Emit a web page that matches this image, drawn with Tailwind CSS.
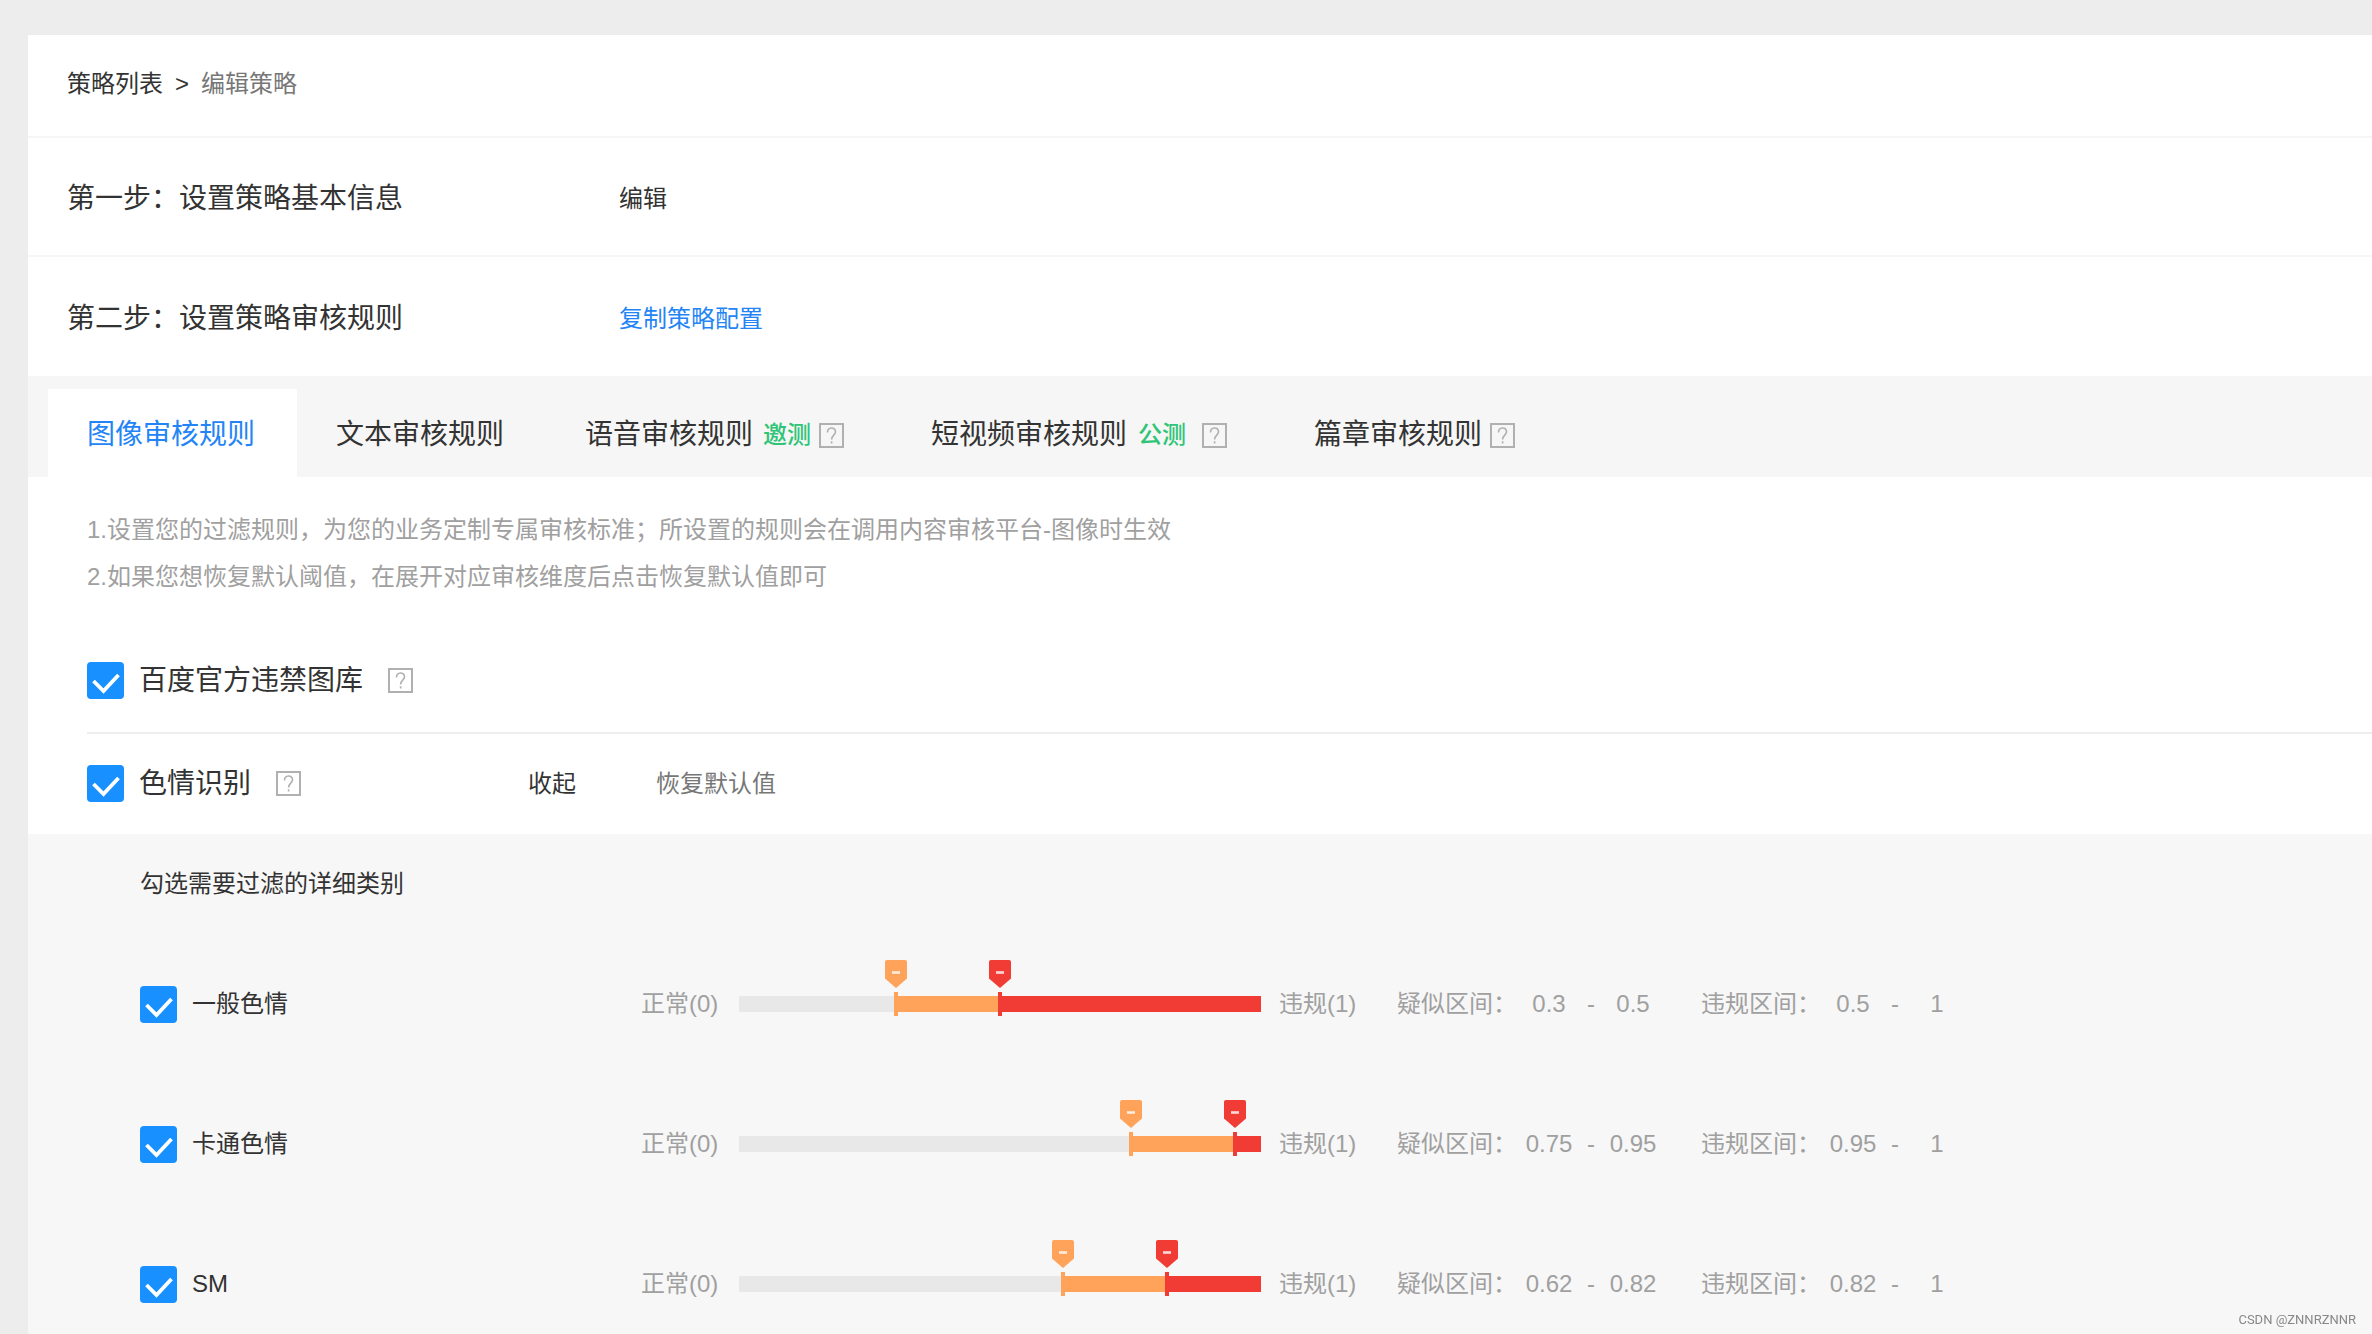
<!DOCTYPE html>
<html lang="zh-CN">
<head>
<meta charset="utf-8">
<meta name="viewport" content="width=device-width, initial-scale=1">
<title>编辑策略</title>
<script src="https://cdn.jsdelivr.net/npm/@tailwindcss/browser@4"></script>
</head>
<body class="bg-[#ededed] font-['Liberation_Sans','Noto_Sans_CJK_SC',sans-serif] text-2xl leading-9 font-normal text-[#333]">
<svg class="hidden" aria-hidden="true">
  <symbol id="help" viewBox="0 0 25 25">
    <rect x="1" y="1" width="23" height="23" fill="none" stroke="#b0b0b0" stroke-width="2"/>
    <path d="M8.5 9.5C8.5 3.5 16.5 3.8 16.5 8.8C16.5 12 12.6 12.4 12.6 16.4M12.6 18.2V20.4" fill="none" stroke="#b0b0b0" stroke-width="1.6"/>
  </symbol>
  <symbol id="check" viewBox="0 0 37 37">
    <path d="M6.5 19L16.5 29L31.5 13" fill="none" stroke="#fff" stroke-width="3.8"/>
  </symbol>
  <symbol id="pin" viewBox="0 0 22 28">
    <path d="M2 0H20Q22 0 22 2V18.5L11 28L0 18.5V2Q0 0 2 0Z" fill="currentColor"/>
    <path d="M7 12.5H15" stroke="#fff" stroke-opacity=".8" stroke-width="2.6"/>
  </symbol>
</svg>

<main class="h-screen overflow-hidden pt-[35px] pl-7">
  <div class="min-h-full bg-white">
    <nav class="flex h-[103px] items-center gap-3 border-b-2 border-[#f6f6f6] pb-1 pl-[39px]">
      <a href="#">策略列表</a>
      <span>&gt;</span>
      <span class="text-[#777]">编辑策略</span>
    </nav>

    <section class="flex h-[119px] items-center border-b-2 border-[#f6f6f6] pt-1 pl-[39px]">
      <h2 class="w-[552px] text-[28px]">第一步：设置策略基本信息</h2>
      <button type="button">编辑</button>
    </section>

    <section class="flex h-[119px] items-center pt-1 pl-[39px]">
      <h2 class="w-[552px] text-[28px]">第二步：设置策略审核规则</h2>
      <button type="button" class="text-[#2385f5]">复制策略配置</button>
    </section>

    <div role="tablist" class="flex items-end bg-[#f6f6f6] pt-[13px] pl-5 text-[28px]">
      <button type="button" role="tab" aria-selected="true" class="h-22 bg-white pt-1 pr-[42px] pl-[39px] text-[#2385f5]">图像审核规则</button>
      <button type="button" role="tab" class="h-22 pt-1 pr-[42px] pl-[39px]">文本审核规则</button>
      <button type="button" role="tab" class="flex h-22 items-center pt-1 pr-12 pl-[39px]">语音审核规则<span class="ml-[10px] text-2xl leading-9 font-medium text-[#2fc476]">邀测</span><svg class="ml-2 size-[25px]"><use href="#help"/></svg></button>
      <button type="button" role="tab" class="flex h-22 items-center pt-1 pr-12 pl-[39px]">短视频审核规则<span class="ml-[11px] text-2xl leading-9 font-medium text-[#2fc476]">公测</span><svg class="ml-4 size-[25px]"><use href="#help"/></svg></button>
      <button type="button" role="tab" class="flex h-22 items-center pt-1 pr-12 pl-[39px]">篇章审核规则<svg class="ml-2 size-[25px]"><use href="#help"/></svg></button>
    </div>

    <div class="pt-[29px] pl-[59px] leading-[47px] text-[#a0a0a0]">
      <p>1.设置您的过滤规则，为您的业务定制专属审核标准；所设置的规则会在调用内容审核平台-图像时生效</p>
      <p>2.如果您想恢复默认阈值，在展开对应审核维度后点击恢复默认值即可</p>
    </div>

    <div class="ml-[59px] flex h-[134px] items-end border-b-2 border-[#eee] pb-[33px]">
      <label class="flex items-center gap-[15px] text-[28px]">
        <span class="relative size-[37px]"><input type="checkbox" checked class="size-full appearance-none rounded-sm bg-[#1890ff]"><svg class="pointer-events-none absolute inset-0 size-full"><use href="#check"/></svg></span>
        百度官方违禁图库
      </label>
      <svg class="mb-[6px] ml-[25px] size-[25px]"><use href="#help"/></svg>
    </div>

    <div class="ml-[59px] flex h-[100px] items-center pb-px">
      <div class="flex w-[441px] items-center">
        <label class="flex items-center gap-[15px] text-[28px]">
          <span class="relative size-[37px]"><input type="checkbox" checked class="size-full appearance-none rounded-sm bg-[#1890ff]"><svg class="pointer-events-none absolute inset-0 size-full"><use href="#check"/></svg></span>
          色情识别
        </label>
        <svg class="ml-[25px] size-[25px]"><use href="#help"/></svg>
      </div>
      <button type="button">收起</button>
      <button type="button" class="ml-20 text-[#777]">恢复默认值</button>
    </div>

    <section class="bg-[#f7f7f7] pt-8 pl-28">
      <h3>勾选需要过滤的详细类别</h3>

      <div class="mt-8 flex h-[140px] items-center">
        <label class="flex w-[501px] items-center gap-[15px]">
          <span class="relative size-[37px]"><input type="checkbox" checked class="size-full appearance-none rounded-sm bg-[#1890ff]"><svg class="pointer-events-none absolute inset-0 size-full"><use href="#check"/></svg></span>
          一般色情
        </label>
        <div class="flex items-center text-[#a0a0a0]">
          <span class="w-[98px]">正常(0)</span>
          <div class="relative h-4 w-[522px] bg-[#e8e8e8]">
            <div class="absolute inset-y-0 right-0 bg-[#ffa25a]" style="width:70%"></div>
            <div class="absolute inset-y-0 right-0 bg-[#f13b35]" style="width:50%"></div>
            <div class="absolute -top-9 h-14 w-[22px] -translate-x-1/2 text-[#ffa25a]" style="left:30%"><svg class="h-7 w-full"><use href="#pin"/></svg><i class="mx-auto mt-1 block h-6 w-1 bg-current"></i></div>
            <div class="absolute -top-9 h-14 w-[22px] -translate-x-1/2 text-[#f13b35]" style="left:50%"><svg class="h-7 w-full"><use href="#pin"/></svg><i class="mx-auto mt-1 block h-6 w-1 bg-current"></i></div>
            <input type="range" aria-label="一般色情疑似阈值" min="0" max="1" step="0.01" value="0.3" class="absolute inset-x-0 -top-9 h-7 w-full opacity-0">
            <input type="range" aria-label="一般色情违规阈值" min="0" max="1" step="0.01" value="0.5" class="absolute inset-0 size-full opacity-0">
          </div>
          <span class="ml-[18px] w-[118px]">违规(1)</span>
          <span class="pr-[2px]">疑似区间：</span><span class="w-15 text-center">0.3</span><span class="w-6 text-center">-</span><span class="w-15 text-center">0.5</span>
          <span class="ml-[38px] pr-[2px]">违规区间：</span><span class="w-15 text-center">0.5</span><span class="w-6 text-center">-</span><span class="w-15 text-center">1</span>
        </div>
      </div>

      <div class="flex h-[140px] items-center">
        <label class="flex w-[501px] items-center gap-[15px]">
          <span class="relative size-[37px]"><input type="checkbox" checked class="size-full appearance-none rounded-sm bg-[#1890ff]"><svg class="pointer-events-none absolute inset-0 size-full"><use href="#check"/></svg></span>
          卡通色情
        </label>
        <div class="flex items-center text-[#a0a0a0]">
          <span class="w-[98px]">正常(0)</span>
          <div class="relative h-4 w-[522px] bg-[#e8e8e8]">
            <div class="absolute inset-y-0 right-0 bg-[#ffa25a]" style="width:25%"></div>
            <div class="absolute inset-y-0 right-0 bg-[#f13b35]" style="width:5%"></div>
            <div class="absolute -top-9 h-14 w-[22px] -translate-x-1/2 text-[#ffa25a]" style="left:75%"><svg class="h-7 w-full"><use href="#pin"/></svg><i class="mx-auto mt-1 block h-6 w-1 bg-current"></i></div>
            <div class="absolute -top-9 h-14 w-[22px] -translate-x-1/2 text-[#f13b35]" style="left:95%"><svg class="h-7 w-full"><use href="#pin"/></svg><i class="mx-auto mt-1 block h-6 w-1 bg-current"></i></div>
            <input type="range" aria-label="卡通色情疑似阈值" min="0" max="1" step="0.01" value="0.75" class="absolute inset-x-0 -top-9 h-7 w-full opacity-0">
            <input type="range" aria-label="卡通色情违规阈值" min="0" max="1" step="0.01" value="0.95" class="absolute inset-0 size-full opacity-0">
          </div>
          <span class="ml-[18px] w-[118px]">违规(1)</span>
          <span class="pr-[2px]">疑似区间：</span><span class="w-15 text-center">0.75</span><span class="w-6 text-center">-</span><span class="w-15 text-center">0.95</span>
          <span class="ml-[38px] pr-[2px]">违规区间：</span><span class="w-15 text-center">0.95</span><span class="w-6 text-center">-</span><span class="w-15 text-center">1</span>
        </div>
      </div>

      <div class="flex h-[140px] items-center">
        <label class="flex w-[501px] items-center gap-[15px]">
          <span class="relative size-[37px]"><input type="checkbox" checked class="size-full appearance-none rounded-sm bg-[#1890ff]"><svg class="pointer-events-none absolute inset-0 size-full"><use href="#check"/></svg></span>
          SM
        </label>
        <div class="flex items-center text-[#a0a0a0]">
          <span class="w-[98px]">正常(0)</span>
          <div class="relative h-4 w-[522px] bg-[#e8e8e8]">
            <div class="absolute inset-y-0 right-0 bg-[#ffa25a]" style="width:38%"></div>
            <div class="absolute inset-y-0 right-0 bg-[#f13b35]" style="width:18%"></div>
            <div class="absolute -top-9 h-14 w-[22px] -translate-x-1/2 text-[#ffa25a]" style="left:62%"><svg class="h-7 w-full"><use href="#pin"/></svg><i class="mx-auto mt-1 block h-6 w-1 bg-current"></i></div>
            <div class="absolute -top-9 h-14 w-[22px] -translate-x-1/2 text-[#f13b35]" style="left:82%"><svg class="h-7 w-full"><use href="#pin"/></svg><i class="mx-auto mt-1 block h-6 w-1 bg-current"></i></div>
            <input type="range" aria-label="SM疑似阈值" min="0" max="1" step="0.01" value="0.62" class="absolute inset-x-0 -top-9 h-7 w-full opacity-0">
            <input type="range" aria-label="SM违规阈值" min="0" max="1" step="0.01" value="0.82" class="absolute inset-0 size-full opacity-0">
          </div>
          <span class="ml-[18px] w-[118px]">违规(1)</span>
          <span class="pr-[2px]">疑似区间：</span><span class="w-15 text-center">0.62</span><span class="w-6 text-center">-</span><span class="w-15 text-center">0.82</span>
          <span class="ml-[38px] pr-[2px]">违规区间：</span><span class="w-15 text-center">0.82</span><span class="w-6 text-center">-</span><span class="w-15 text-center">1</span>
        </div>
      </div>
      <div class="h-8"></div>
    </section>
  </div>
</main>
<div class="fixed right-4 bottom-[6px] font-[Roboto,sans-serif] text-[13px] leading-4 text-[#888]">CSDN @ZNNRZNNR</div>
</body>
</html>
